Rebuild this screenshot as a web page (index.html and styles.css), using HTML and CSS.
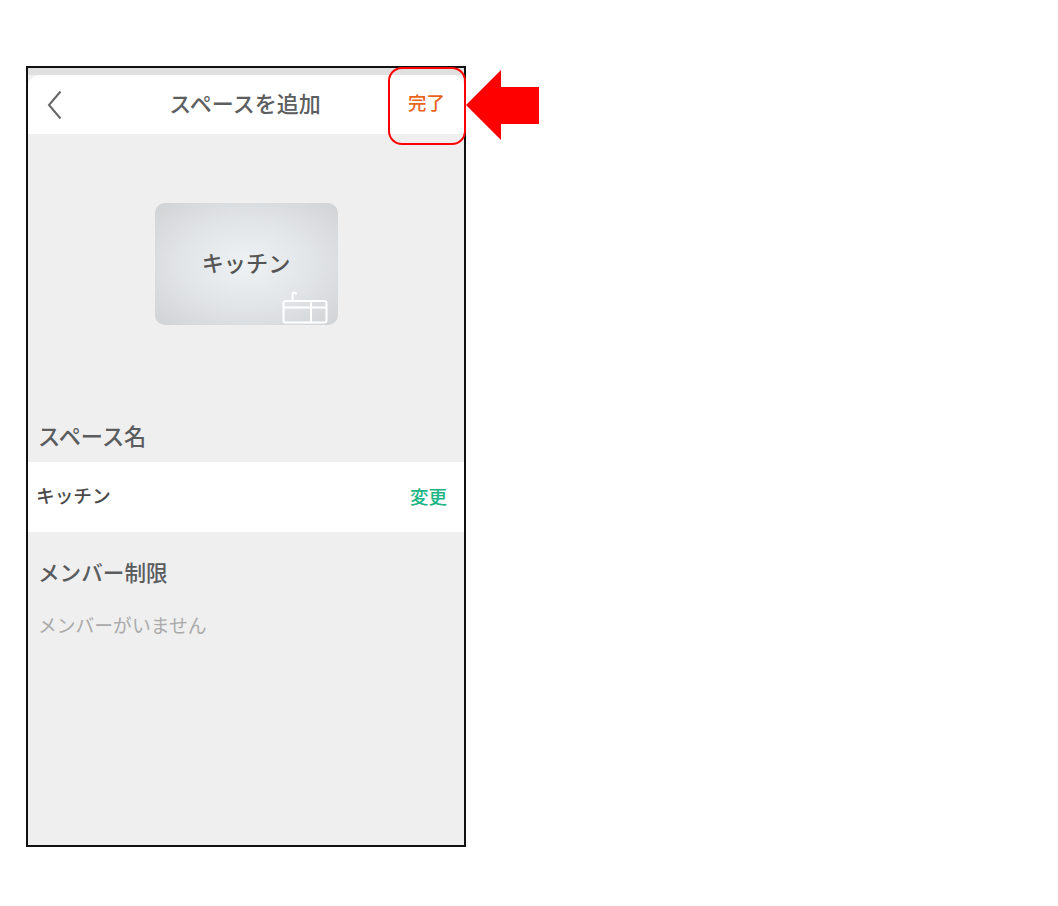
FILE: index.html
```html
<!DOCTYPE html>
<html lang="ja">
<head>
<meta charset="utf-8">
<title>スペースを追加</title>
<link rel="stylesheet" href="styles.css">
</head>
<body>
<div class="stage">
  <div class="phone">
    <div class="screen">
      <header class="navbar">
        <svg class="back" width="16" height="30" viewBox="0 0 16 30"><path d="M13.5 1.5 L2 15 L13.5 28.5" fill="none" stroke="#666" stroke-width="2"/></svg>
        <h1 class="title">スペースを追加</h1>
        <span class="done">完了</span>
      </header>
      <div class="preview">
        <div class="card">
          <span class="card-name">キッチン</span>
          <svg class="card-icon" width="46" height="34" viewBox="0 0 46 34"><g fill="none" stroke="#fff" stroke-width="2"><path d="M1.5 12 Q1.5 10 3.5 10 H42.5 Q44.5 10 44.5 12 V29.5 Q44.5 31.5 42.5 31.5 H3.5 Q1.5 31.5 1.5 29.5 Z"/><path d="M1.5 16.5 H44.5 M29 10 V31.5"/><path d="M10.5 10 V3.5 Q10.5 1.5 12.5 1.5 Q14 1.5 14 3.5"/></g></svg>
        </div>
      </div>
      <h2 class="section-title first">スペース名</h2>
      <div class="name-row">
        <span class="name-value">キッチン</span>
        <span class="change">変更</span>
      </div>
      <h2 class="section-title second">メンバー制限</h2>
      <p class="empty">メンバーがいません</p>
    </div>
    <div class="highlight"></div>
    <svg class="arrow" width="76" height="72" viewBox="0 0 76 72"><path d="M1 36 L36 1 V18 H74 V55 H36 V71 Z" fill="#ff0000"/></svg>
  </div>
</div>
</body>
</html>
```
FILE: styles.css
```css
html, body {
  margin: 0;
  padding: 0;
  background: #fff;
}
body {
  font-family: "Noto Sans CJK JP", "Noto Sans", sans-serif;
}
.stage {
  padding: 66px 0 0 26px;
}
.phone {
  position: relative;
  box-sizing: border-box;
  width: 440px;
  height: 781px;
  border: 2px solid #111;
}
.screen {
  height: 100%;
  background: #efefef;
  overflow: hidden;
}
.navbar {
  display: flex;
  align-items: center;
  justify-content: space-between;
  position: relative;
  box-sizing: border-box;
  height: 66px;
  padding: 7px 19px 0 19px;
  background: linear-gradient(#e0e0e0 7px, transparent 7px);
}
.navbar::before {
  content: "";
  position: absolute;
  left: 0;
  right: 0;
  top: 7px;
  bottom: 0;
  background: #fff;
  border-radius: 12px 12px 0 0;
}
.back, .done {
  position: relative;
}
.title {
  position: absolute;
  left: 0;
  right: 2px;
  top: 7px;
  bottom: 6px;
  margin: 0;
  display: flex;
  align-items: center;
  justify-content: center;
  font-size: 22px;
  font-weight: 500;
  color: #5c5e60;
}
.done {
  margin-bottom: 6px;
  font-size: 18.5px;
  font-weight: 500;
  color: #e8641b;
}
.preview {
  display: flex;
  justify-content: center;
  padding-top: 69px;
}
.card {
  position: relative;
  display: flex;
  align-items: center;
  justify-content: center;
  width: 183px;
  height: 122px;
  border-radius: 10px;
  background: radial-gradient(ellipse at 50% 50%, #eef2f4 0%, #e2e5e7 50%, #d0d2d4 100%);
}
.card-name {
  margin-bottom: 5px;
  font-size: 22.2px;
  font-weight: 500;
  color: #555;
}
.card-icon {
  position: absolute;
  right: 10px;
  bottom: 0;
}
.section-title {
  margin: 0 0 0 10px;
  font-size: 21.6px;
  font-weight: 500;
  line-height: 30px;
  color: #5a5c5e;
}
.section-title.first {
  padding-top: 95px;
  padding-bottom: 12px;
  font-size: 22.2px;
}
.section-title.second {
  padding-top: 25px;
}
.name-row {
  display: flex;
  align-items: center;
  justify-content: space-between;
  box-sizing: border-box;
  height: 70px;
  padding: 0 17px 0 8px;
  background: #fff;
}
.name-value {
  margin-bottom: 6px;
  font-size: 18.7px;
  font-weight: 500;
  color: #4a4a4a;
}
.change {
  margin-bottom: 3px;
  font-size: 18.5px;
  font-weight: 500;
  color: #1db585;
}
.empty {
  margin: 24px 0 0 10px;
  font-size: 18.8px;
  line-height: 28px;
  color: #aaa;
}
.highlight {
  position: absolute;
  left: 360px;
  top: -1px;
  width: 78px;
  height: 78px;
  box-sizing: border-box;
  border: 2px solid #f00;
  border-radius: 14px;
}
.arrow {
  position: absolute;
  left: 437px;
  top: 1px;
}
```
